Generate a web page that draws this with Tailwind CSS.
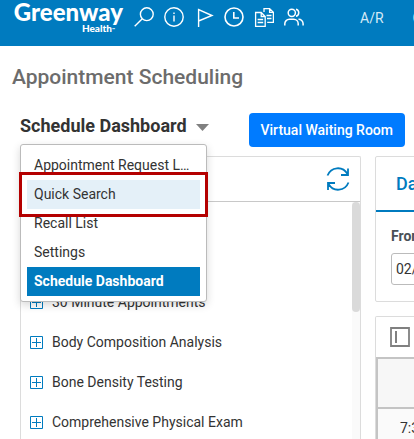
<!DOCTYPE html>
<html lang="en">
<head>
<meta charset="utf-8">
<meta name="viewport" content="width=device-width, initial-scale=1">
<title>Appointment Scheduling</title>
<script src="https://cdn.jsdelivr.net/npm/@tailwindcss/browser@4"></script>
</head>
<body class="flex h-screen flex-col overflow-hidden bg-white font-['Roboto',sans-serif] text-sm text-[#333]">
<header class="flex h-[46px] shrink-0 items-start overflow-hidden bg-[#007bbf] pl-3 text-white">
  <a href="#" aria-label="Greenway Health" class="flex w-[111px] shrink-0 flex-col items-end font-['Lato',sans-serif] font-black">
    <span class="text-2xl leading-6">Greenway</span>
    <span class="flex items-end pr-2 text-[10px] leading-2">Health<span class="text-[4px] leading-1">™</span></span>
  </a>
  <nav class="flex shrink-0 items-center gap-[10px] pt-[7px] pl-[11px]" aria-label="Tools">
    <button aria-label="Search" class="size-5"><svg viewBox="0 0 20 20" class="size-5" fill="none" stroke="currentColor" stroke-width="1.4"><circle cx="12.8" cy="7.2" r="6.4"/><path d="M8.3 11.7L.7 19.3"/></svg></button>
    <button aria-label="Information" class="size-5"><svg viewBox="0 0 20 20" class="size-5" fill="none" stroke="currentColor" stroke-width="1.4"><circle cx="10" cy="10" r="9.2"/><path d="M10 8.5v6M10 5.5v1.6"/></svg></button>
    <button aria-label="Flags" class="size-5"><svg viewBox="0 0 20 20" class="size-5" fill="none" stroke="currentColor" stroke-width="1.4"><path d="M4.6 20V2.5L18 8.5L4.6 14"/></svg></button>
    <button aria-label="Recent" class="size-5"><svg viewBox="0 0 20 20" class="size-5" fill="none" stroke="currentColor" stroke-width="1.6"><circle cx="10" cy="10" r="9"/><path d="M9.8 5v6H15"/></svg></button>
    <button aria-label="Documents" class="size-5"><svg viewBox="0 0 20 20" class="size-5" fill="none" stroke="currentColor" stroke-width="1.3"><path d="M1.6 5.500h5.600l4 4v9.900H1.600zM7.200 5.500v4h4M3.600 12.500h5.600M3.600 15.500h5.600M10 5V1.600h5.600l3.800 3.800v10h-6.200M15.600 1.600v3.800h3.800M12.500 8.500h5M13 11.500h4.500"/></svg></button>
    <button aria-label="Patients" class="size-5"><svg viewBox="0 0 20 20" class="size-5" fill="none" stroke="currentColor" stroke-width="1.5"><circle cx="7.8" cy="5.8" r="3.6"/><path d="M.8 18.500v-1.700a4.500 4.500 0 0 1 4.500-4.500h4.400a4.500 4.500 0 0 1 4.500 4.500v1.700M12 2.300a3.600 3.600 0 0 1 0 7M14.500 12.300a4.400 4.400 0 0 1 4.600 4.400v1.800"/></svg></button>
  </nav>
  <nav class="flex shrink-0 gap-[29px] pt-2 pl-14 leading-5 text-[#d5eaf6]" aria-label="Modules">
    <a href="#">A/R</a>
    <a href="#">C</a>
  </nav>
</header>
<main class="flex min-h-0 flex-1 flex-col overflow-hidden">
  <h1 class="px-3 pt-[17px] text-[21px] leading-7 font-medium text-[#6c6c6c]">Appointment Scheduling</h1>
  <div class="flex items-start justify-between pt-[22px] pr-[9px] pl-5">
    <div class="relative">
      <button aria-haspopup="menu" aria-expanded="true" class="flex items-center gap-[9px] pt-px text-lg leading-6 font-bold">Schedule Dashboard
        <svg viewBox="0 0 13 7" class="mt-[2px] h-[7px] w-[13px]" fill="#808080"><path d="M0 0h13L6.5 7z"/></svg>
      </button>
      <ul role="menu" class="absolute top-[31px] left-0 z-10 w-[187px] rounded-[3px] border border-[#bbb] bg-white px-[6px] pt-[6px] pb-[5px] leading-[29px] shadow-[0_3px_9px_rgba(0,0,0,0.16)]">
        <li><a href="#" role="menuitem" class="block truncate pr-[9px] pl-[7px]">Appointment Request List</a></li>
        <li class="relative"><a href="#" role="menuitem" class="block bg-[#e4f0f8] px-[7px]">Quick Search</a><span class="pointer-events-none absolute -inset-2 border-3 border-[#b40000]"></span></li>
        <li><a href="#" role="menuitem" class="block px-[7px]">Recall List</a></li>
        <li><a href="#" role="menuitem" class="block px-[7px]">Settings</a></li>
        <li><a href="#" role="menuitem" class="block bg-[#007bbf] px-[7px] font-bold text-white">Schedule Dashboard</a></li>
      </ul>
    </div>
    <button class="h-[34px] rounded bg-[#007bff] px-3 font-medium text-white">Virtual Waiting Room</button>
  </div>
  <div class="flex min-h-0 flex-1 gap-[14px] pt-[9px] pl-5">
    <section class="flex w-[341px] shrink-0 flex-col rounded-t-[2px] border border-b-0 border-[#dcdcdc]">
      <div class="flex h-[45px] shrink-0 items-center justify-end border-b border-[#c8c8c8] pr-[10px]">
        <button aria-label="Refresh"><svg viewBox="0 0 24 26" class="h-[26px] w-6" fill="none" stroke="#007bbf" stroke-width="1.8"><path d="M1.500 9.500C5 .8 16.500 -.5 21.500 8M22 2.500v6.500h-7M22.500 16.500C19 25.200 7.500 26.500 2.500 18M2 24v-7h7"/></svg></button>
      </div>
      <div class="flex min-h-0 flex-1 overflow-hidden">
        <ul class="flex-1 pt-20 pl-[9px] leading-10">
          <li class="flex items-center gap-[9px]"><button aria-label="Expand"><svg viewBox="0 0 13 13" class="size-[13px]" fill="none" stroke="#007bbf"><path d="M.5.5h12v12H.5zM6.500 2v9M2 6.500h9"/></svg></button>30 Minute Appointments</li>
          <li class="flex items-center gap-[9px]"><button aria-label="Expand"><svg viewBox="0 0 13 13" class="size-[13px]" fill="none" stroke="#007bbf"><path d="M.5.5h12v12H.5zM6.500 2v9M2 6.500h9"/></svg></button>Body Composition Analysis</li>
          <li class="flex items-center gap-[9px]"><button aria-label="Expand"><svg viewBox="0 0 13 13" class="size-[13px]" fill="none" stroke="#007bbf"><path d="M.5.5h12v12H.5zM6.500 2v9M2 6.500h9"/></svg></button>Bone Density Testing</li>
          <li class="flex items-center gap-[9px]"><button aria-label="Expand"><svg viewBox="0 0 13 13" class="size-[13px]" fill="none" stroke="#007bbf"><path d="M.5.5h12v12H.5zM6.500 2v9M2 6.500h9"/></svg></button>Comprehensive Physical Exam</li>
        </ul>
        <div class="w-2 bg-[#fafafa]"><div class="h-[110px] rounded-full bg-[#dadada]"></div></div>
      </div>
    </section>
    <div class="flex min-w-80 flex-1 flex-col gap-[14px]">
      <section class="rounded-[2px] border border-[#dcdcdc] pb-4">
        <div class="flex h-[55px] items-center border-b-2 border-[#007bbf] pl-5 text-lg font-medium text-[#007bbf]">Day</div>
        <form class="flex flex-col px-[15px] pt-[14px]">
          <label for="from" class="leading-5 font-bold text-[#495057]">From</label>
          <input id="from" value="02/" class="mt-[7px] h-8 w-28 rounded-[3px] border border-[#bbb] px-1">
        </form>
      </section>
      <section class="flex flex-1 flex-col rounded-t-[2px] border border-b-0 border-[#dcdcdc]">
        <div class="flex h-10 shrink-0 items-center pl-[14px]">
          <button aria-label="Toggle side panel"><svg viewBox="0 0 20 20" class="size-5" fill="none" stroke="#808080"><path stroke-width="1.8" d="M1 1h18v18H1z"/><path stroke-width="2" d="M6 4v12"/></svg></button>
        </div>
        <table class="w-full border-collapse border-2 border-[#c4c4c4] bg-[#f7f7f7]">
          <thead><tr><th class="h-[50px] border-2 border-[#c4c4c4]"></th></tr></thead>
          <tbody><tr><td class="h-10 bg-[#fafafa] pl-[22px]">7:30</td></tr></tbody>
        </table>
      </section>
    </div>
  </div>
</main>
</body>
</html>
